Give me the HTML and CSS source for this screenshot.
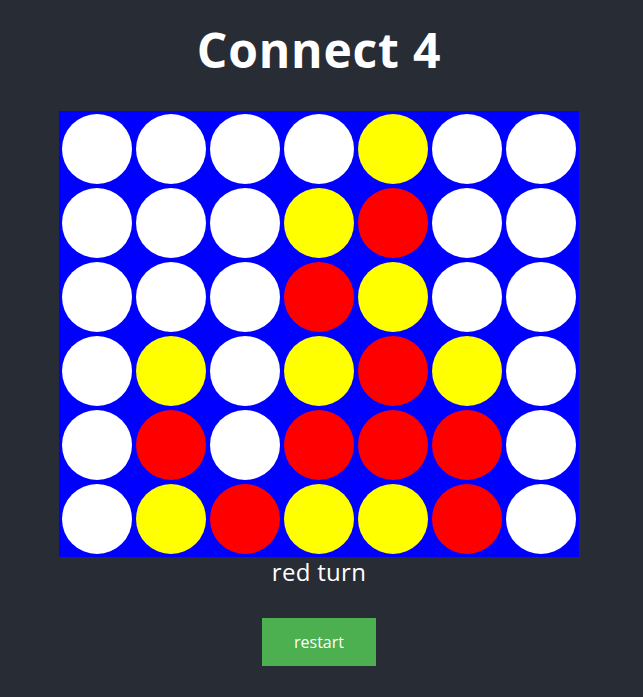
FILE: index.html
```html
<!DOCTYPE html>
<html>
<head>
<meta charset="utf-8">
<link rel="stylesheet" href="styles.css">
</head>
<body>
<div class="app">
  <h1 class="title">Connect 4</h1>
  <div class="board">
    <div class="row"><span class="cell"></span><span class="cell"></span><span class="cell"></span><span class="cell"></span><span class="cell y"></span><span class="cell"></span><span class="cell"></span></div>
    <div class="row"><span class="cell"></span><span class="cell"></span><span class="cell"></span><span class="cell y"></span><span class="cell r"></span><span class="cell"></span><span class="cell"></span></div>
    <div class="row"><span class="cell"></span><span class="cell"></span><span class="cell"></span><span class="cell r"></span><span class="cell y"></span><span class="cell"></span><span class="cell"></span></div>
    <div class="row"><span class="cell"></span><span class="cell y"></span><span class="cell"></span><span class="cell y"></span><span class="cell r"></span><span class="cell y"></span><span class="cell"></span></div>
    <div class="row"><span class="cell"></span><span class="cell r"></span><span class="cell"></span><span class="cell r"></span><span class="cell r"></span><span class="cell r"></span><span class="cell"></span></div>
    <div class="row"><span class="cell"></span><span class="cell y"></span><span class="cell r"></span><span class="cell y"></span><span class="cell y"></span><span class="cell r"></span><span class="cell"></span></div>
  </div>
  <div class="status">red turn</div>
  <button class="restart">restart</button>
</div>
</body>
</html>
```
FILE: styles.css
```css
html, body {
  margin: 0;
  padding: 0;
  background: #282c34;
  height: 100%;
}
body {
  font-family: "Open Sans", "Noto Sans", sans-serif;
  color: #fff;
}
.app {
  width: 638px;
  display: flex;
  flex-direction: column;
  align-items: center;
}
.title {
  margin: 18px 0 0;
  font-size: 48px;
  font-weight: 700;
  line-height: 64px;
  letter-spacing: 0.8px;
}
.board {
  margin-top: 29px;
  background: #0000ff;
  padding: 1px;
  display: flex;
  flex-direction: column;
}
.row {
  display: flex;
}
.cell {
  width: 70px;
  height: 70px;
  margin: 2px;
  border-radius: 50%;
  background: #fff;
}
.cell.r { background: #ff0000; }
.cell.y { background: #ffff00; }
.status {
  font-size: 24px;
  line-height: 30px;
  margin-top: 0;
  letter-spacing: 0.3px;
}
.restart {
  margin-top: 31px;
  width: 114px;
  height: 48px;
  border: none;
  background: #4caf50;
  color: #fff;
  font-family: "Open Sans", "Noto Sans", sans-serif;
  font-size: 16px;
  padding: 0;
}
```
